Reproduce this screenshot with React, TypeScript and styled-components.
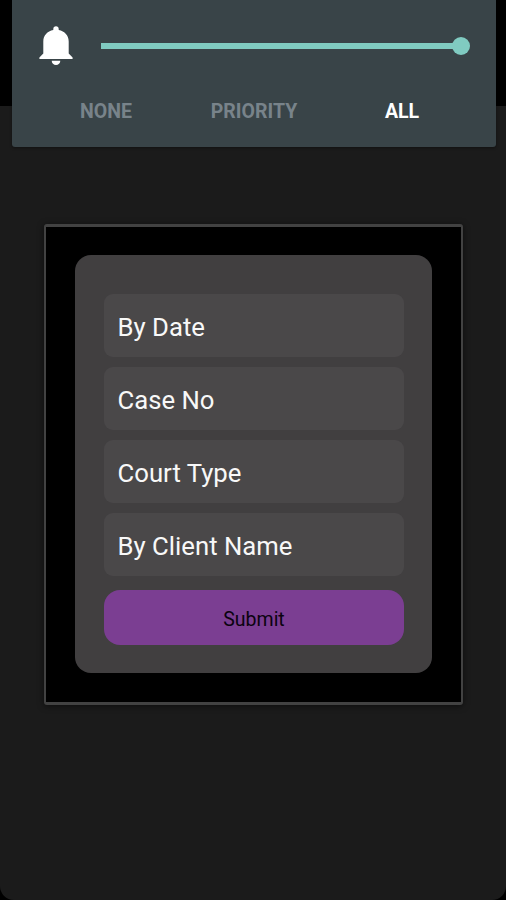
import React from "react";
import styled, { createGlobalStyle } from "styled-components";

const GlobalStyle = createGlobalStyle`
  * { box-sizing: border-box; }
  body { margin: 0; background: #000; font-family: Roboto, "Liberation Sans", sans-serif; }
`;

const Screen = styled.main`
  width: 506px;
  height: 900px;
  overflow: hidden;
  border-radius: 0 0 14px 14px;
  background: linear-gradient(#000 106px, #1b1b1b 106px);
`;

const VolumePanel = styled.section`
  width: 484.5px;
  height: 146.5px;
  margin-left: 11.5px;
  border-radius: 0 0 3px 3px;
  background: #394448;
  box-shadow: 0 1px 3px rgba(0, 0, 0, 0.4);
`;

const SliderRow = styled.div`
  display: flex;
  align-items: center;
  height: 91px;
  padding: 0 26px 0 27.5px;
`;

const BellIcon = styled.svg`
  width: 34px;
  height: 39px;
  margin-right: 28px;
  fill: #fff;
`;

const Track = styled.div`
  display: flex;
  flex: 1;
  align-items: center;
  height: 18px;
`;

const TrackFill = styled.div`
  flex: 1;
  height: 6px;
  margin-right: -1px;
  background: #80cbc1;
`;

const Thumb = styled.div`
  width: 18px;
  height: 18px;
  border-radius: 50%;
  background: #80cbc1;
`;

const Modes = styled.div`
  display: grid;
  grid-template-columns: 148px 148px 148px;
  margin-left: 20.5px;
`;

const Mode = styled.button<{ $active?: boolean }>`
  height: 42px;
  padding: 0;
  border: 0;
  background: none;
  color: ${({ $active }) => ($active ? "#fff" : "#78838a")};
  font: bold 19.5px/42px Roboto, sans-serif;
`;

const Dialog = styled.section`
  width: 419px;
  height: 481px;
  margin: 77.5px 0 0 44px;
  padding: 28px 29px;
  border: solid #424242;
  border-width: 3px 2px;
  border-radius: 3px;
  background: #000;
  box-shadow: 0 1px 6px rgba(0, 0, 0, 0.55);
`;

const Card = styled.form`
  display: flex;
  flex-direction: column;
  gap: 10px;
  width: 357px;
  height: 418px;
  padding: 39px 28px 28px 29px;
  border-radius: 16px;
  background: #413f40;
`;

const Field = styled.div`
  height: 63px;
  padding-left: 13.6px;
  border-radius: 9px;
  background: #4a4849;
  color: #f8f8f8;
  font-size: 25.7px;
  line-height: 66px;
`;

const Submit = styled.button`
  height: 55.5px;
  margin-top: 3.5px;
  padding: 0;
  border: 0;
  border-radius: 16px;
  background: #7b3e92;
  color: #0b0310;
  font: 19.5px/59px Roboto, sans-serif;
`;

const fields = ["By Date", "Case No", "Court Type", "By Client Name"];

export default function App() {
  return (
    <>
      <GlobalStyle />
      <Screen>
        <VolumePanel>
          <SliderRow>
            <BellIcon viewBox="0 0 34 39" aria-label="Ringer">
              <path d="M17 .3C15.4 .3 14.3 1.4 14.3 2.9V4.1C8.3 5.4 4.3 9.6 4.3 15.5V27.5L.4 31.6V33H33.6V31.6L29.7 27.5V15.5C29.7 9.6 25.7 5.4 19.7 4.1V2.9C19.7 1.4 18.6 .3 17 .3Z" />
              <path d="M12.7 34.8H21.3C21.3 37.2 19.4 39 17 39S12.7 37.2 12.7 34.8Z" />
            </BellIcon>
            <Track>
              <TrackFill />
              <Thumb />
            </Track>
          </SliderRow>
          <Modes>
            <Mode>NONE</Mode>
            <Mode>PRIORITY</Mode>
            <Mode $active>ALL</Mode>
          </Modes>
        </VolumePanel>
        <Dialog>
          <Card>
            {fields.map((label) => (
              <Field key={label}>{label}</Field>
            ))}
            <Submit type="button">Submit</Submit>
          </Card>
        </Dialog>
      </Screen>
    </>
  );
}
